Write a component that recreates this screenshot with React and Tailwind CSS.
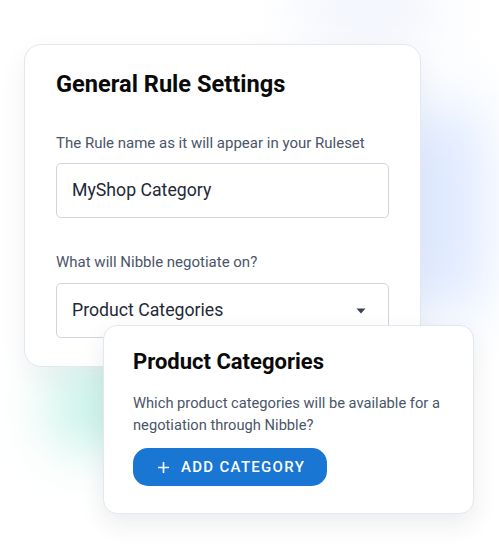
export default function App() {
  const font = { fontFamily: "Roboto, 'Noto Sans', sans-serif" };
  return (
    <div className="relative w-[499px] h-[559px] overflow-hidden bg-white" style={font}>
      {/* background glows */}
      <div className="absolute left-[400px] top-[100px] w-[80px] h-[220px] rounded-full bg-[#d9e6ff] blur-[32px]" />
      <div className="absolute left-[300px] top-[-20px] w-[140px] h-[60px] rounded-full bg-[#eef2fb] blur-[30px]" />
      <div className="absolute left-[50px] top-[365px] w-[90px] h-[85px] rounded-full bg-[#bff0e5] blur-[28px]" />

      {/* card 1 */}
      <div className="relative ml-[24px] mt-[44px] w-[397px] h-[323px] rounded-[17px] border border-[#e2e8f0] bg-white shadow-[0_10px_30px_rgba(30,41,59,0.06)] px-[31px] pt-[25px] flex flex-col">
        <h1 className="text-[23.6px] leading-[28px] font-bold text-[#0a0a0a]">General Rule Settings</h1>
        <p className="mt-[35px] text-[15px] leading-[20px] text-[#4a5568]">The Rule name as it will appear in your Ruleset</p>
        <div className="mt-[10px] h-[55px] rounded-[5px] border border-[#cfd6df] flex items-center pl-[15px] text-[17.7px] text-[#1f2937]">
          MyShop Category
        </div>
        <p className="mt-[34px] text-[15px] leading-[20px] text-[#4a5568]">What will Nibble negotiate on?</p>
        <div className="mt-[11px] h-[55px] rounded-[5px] border border-[#cfd6df] flex items-center justify-between pl-[15px] pr-[22px] text-[17.7px] text-[#1f2937]">
          <span>Product Categories</span>
          <svg width="10" height="6" viewBox="0 0 10 6" className="mt-[1px]">
            <path d="M0.5 0.5 H9.5 L5 5.5 Z" fill="#374151" />
          </svg>
        </div>
      </div>

      {/* card 2 (overlapping popover) */}
      <div className="absolute left-[103px] top-[325px] w-[371px] h-[189px] rounded-[14px] border border-[#e2e8f0] bg-white shadow-[0_10px_24px_rgba(30,41,59,0.09)] pl-[29px] pt-[24px] flex flex-col items-start">
        <h2 className="text-[22px] leading-[24px] font-bold text-[#0a0a0a]">Product Categories</h2>
        <p className="mt-[18px] w-[320px] text-[14.7px] leading-[22px] text-[#4a5568]">
          Which product categories will be available for a negotiation through Nibble?
        </p>
        <button className="mt-[12px] h-[38px] rounded-[15px] bg-[#1976d2] text-white flex items-center gap-[12px] pl-[25px] pr-[22px] text-[15px] font-medium tracking-[1.3px]">
          <svg width="11" height="11" viewBox="0 0 11 11">
            <path d="M5.5 0 V11 M0 5.5 H11" stroke="white" strokeWidth="1.6" />
          </svg>
          <span>ADD CATEGORY</span>
        </button>
      </div>
    </div>
  );
}
